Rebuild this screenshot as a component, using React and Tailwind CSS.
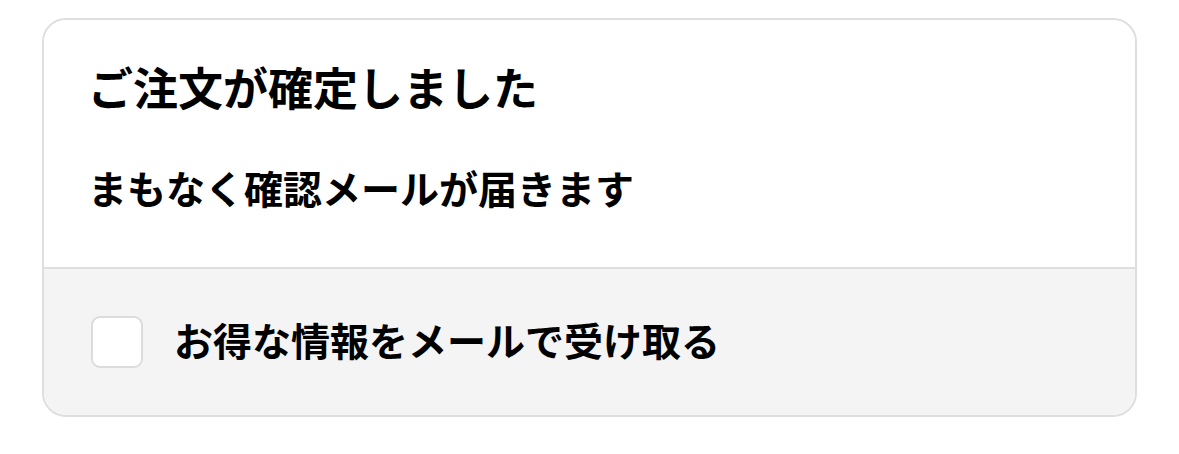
import React from "react";

const OrderConfirmed = () => {
    return (
        <div className="w-[1179px] h-[454px] bg-white pt-[18px] px-[42px] font-['Noto_Sans_CJK_JP','Noto_Sans',sans-serif]">
            <div className="rounded-[24px] border-2 border-[#dedede] overflow-hidden">

                {/* Message */}
                <div className="bg-white pl-[44px] pt-[40px] pb-[56px]">
                    <h1 className="text-[45px] leading-[54px] font-bold text-black">
                        ご注文が確定しました
                    </h1>
                    <p className="mt-[49px] text-[39px] leading-[48px] font-semibold text-black">
                        まもなく確認メールが届きます
                    </p>
                </div>

                {/* Newsletter opt-in */}
                <label className="flex items-center h-[148px] pl-[47px] bg-[#f4f4f4] border-t-2 border-[#dedede] cursor-pointer">
                    <span className="w-[52px] h-[52px] rounded-[9px] border-2 border-[#dcdcdc] bg-white shrink-0" />
                    <span className="ml-[31px] pb-[6px] text-[39px] leading-[48px] font-bold text-black">
                        お得な情報をメールで受け取る
                    </span>
                </label>
            </div>
        </div>
    );
};

export default function App() {
    return <OrderConfirmed />;
}
